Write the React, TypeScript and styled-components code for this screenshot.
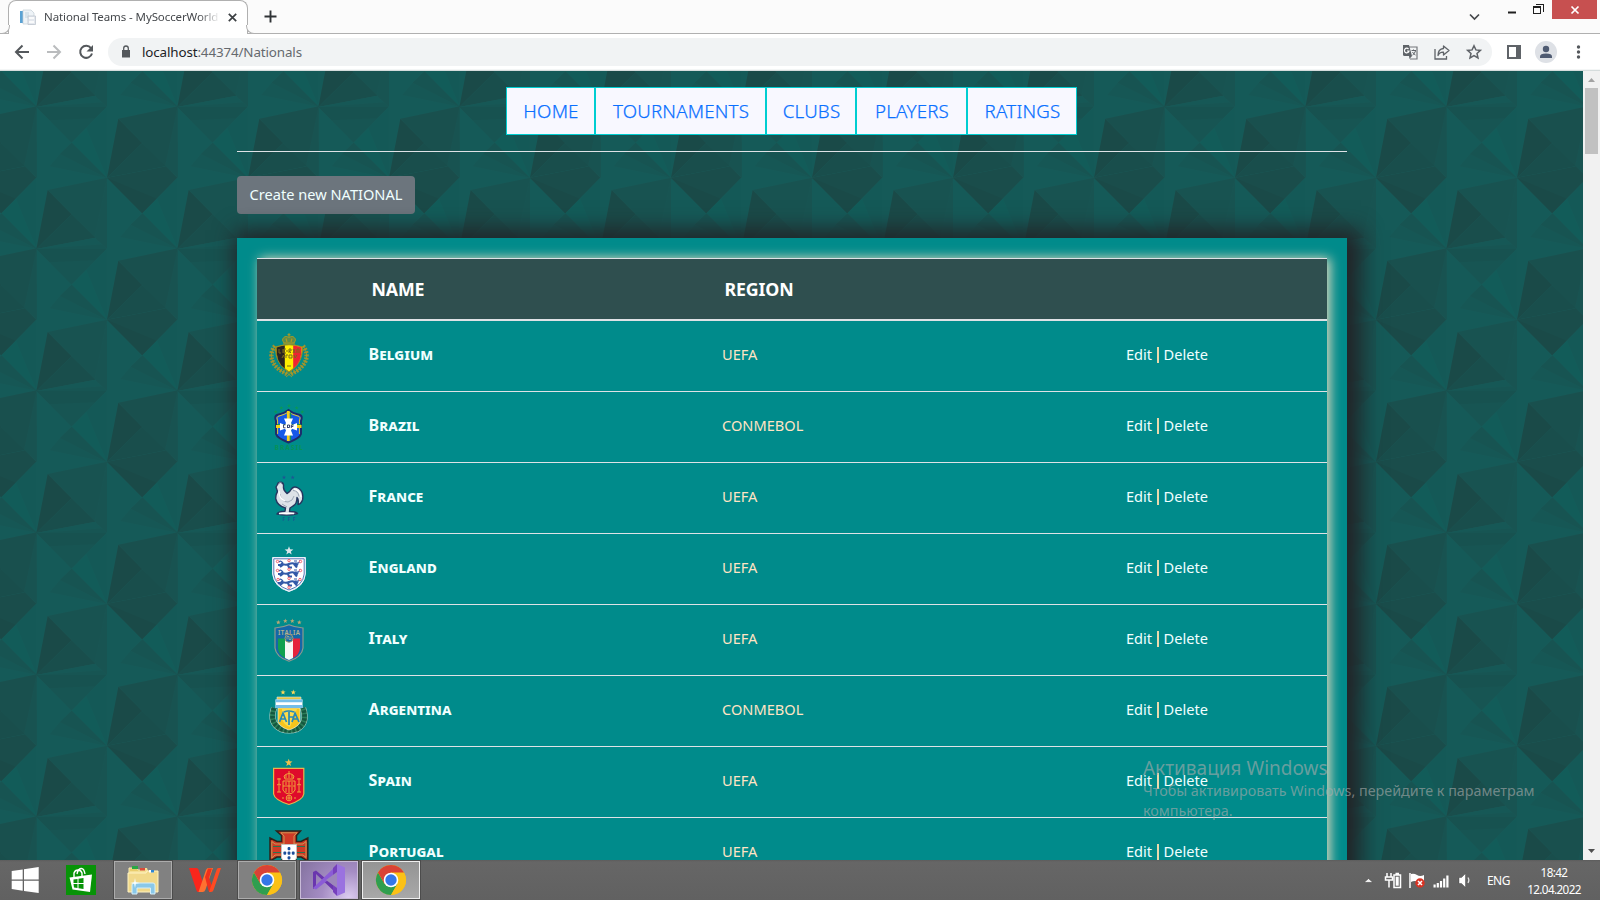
import React from "react";
import styled, { createGlobalStyle, css } from "styled-components";

/* ---------- page texture: one repeating tile of folded facets ---------- */
const facets = (x: number, y: number, dark: boolean) => `
<g transform="translate(${x} ${y})">
<path d="M34-177L212-214V0L174-34Z" fill="${dark ? "#19504e" : "#185351"}"/>
<path d="M212-214V0L174-34Z" fill="#175553" opacity=".6"/>
<path d="M0 0L34-177L106-104Z" fill="#1a4a48"/>
<path d="M0 0L106-104L177-34Z" fill="#194e4c"/>
<path d="M0 0L177-34L190-18L211 0Z" fill="#165856"/>
<path d="M0 0L200-14L211 0Z" fill="#175553"/>
${
  dark
    ? `<path d="M0 0L177-34L211 0L106 107Z" fill="#1a4d4b"/><path d="M0 0L150 63L106 107Z" fill="#1a4a48"/>`
    : `<path d="M0 0H211L106 107Z" fill="#175553"/><path d="M0 0H211L176 34L40 40Z" fill="#175250"/>`
}
<path d="M106 107L211 0L212 213Z" fill="#145957"/>
<path d="M106 107L150 63L212 213Z" fill="#125c59"/>
<path d="M106 107L212 213L40 178L71 141Z" fill="#165755"/>
<path d="M106 107L212 213L71 141Z" fill="#175452"/>
</g>`;
const points: [number, number, boolean][] = [];
for (let r = -1; r < 3; r++)
  for (let c = -1; c < 3; c++) {
    points.push([109 + c * 423, 111 + r * 426, false]);
    points.push([321 + c * 423, 323 + r * 426, true]);
  }
const tile = `<svg xmlns="http://www.w3.org/2000/svg" width="141" height="142" viewBox="0 3 423 426"><rect y="3" width="423" height="426" fill="#155a58"/>${points
  .map((p) => facets(...p))
  .join("")}</svg>`;
const texture = `url("data:image/svg+xml,${encodeURIComponent(tile).replace(/\(/g, "%28").replace(/\)/g, "%29")}")`;

const Global = createGlobalStyle`
  * { box-sizing: border-box; }
  body { margin: 0; overflow: hidden; font-family: "Noto Sans", "Open Sans", sans-serif; }
`;

const Screen = styled.div`
  position: relative;
  width: 1600px;
  height: 900px;
  display: flex;
  flex-direction: column;
  overflow: hidden;
`;

/* ---------- browser frame ---------- */
const TabStrip = styled.header`
  flex: none;
  height: 34px;
  display: flex;
  align-items: flex-start;
  padding: 0 3px 0 8px;
  background: #fbfbfb;
  box-shadow: inset 0 -1px #b0b0b0;
`;
const Tab = styled.div`
  position: relative;
  width: 240px;
  height: 34px;
  display: flex;
  align-items: center;
  padding: 0 10px 0 11px;
  background: #fff;
  border: 1px solid #b0b0b0;
  border-bottom: 0;
  border-radius: 8px 8px 0 0;
  &::before,
  &::after {
    content: "";
    position: absolute;
    bottom: 0;
    width: 8px;
    height: 8px;
    border-bottom: 1px solid #b0b0b0;
    background: #fbfbfb;
  }
  &::before {
    left: -8px;
    border-right: 1px solid #b0b0b0;
    border-bottom-right-radius: 8px;
  }
  &::after {
    right: -8px;
    border-left: 1px solid #b0b0b0;
    border-bottom-left-radius: 8px;
  }
`;
const TabTitle = styled.span`
  width: 176px;
  margin: 0 8px 2px 8px;
  overflow: hidden;
  white-space: nowrap;
  font-size: 11.5px;
  letter-spacing: -0.1px;
  color: #45484c;
  mask-image: linear-gradient(90deg, #000 88%, transparent);
`;
const NewTab = styled.div`
  margin: 10px auto 0 15.5px;
  display: flex;
`;
const TabSearch = styled.div`
  display: flex;
  margin: 13px 20px 0 0;
`;
const WindowButtons = styled.div`
  display: flex;
  align-items: flex-start;
`;
const WindowButton = styled.div<{ $close?: boolean }>`
  width: ${(p) => (p.$close ? 45 : 26)}px;
  height: 19px;
  display: flex;
  align-items: center;
  justify-content: center;
  padding-right: ${(p) => (p.$close ? 0 : 2)}px;
  background: ${(p) => (p.$close ? "#c75050" : "transparent")};
`;
const Toolbar = styled.div`
  flex: none;
  height: 37px;
  display: flex;
  align-items: center;
  padding: 0 12px 1px 12px;
  background: #fff;
  border-bottom: 1px solid #d5dcdc;
  box-shadow: inset 0 -1px #f4f6f6;
`;
const NavIcons = styled.div`
  display: flex;
  gap: 12px;
  margin-right: 12px;
`;
const AddressBar = styled.div`
  flex: 1;
  height: 28px;
  display: flex;
  align-items: center;
  padding: 0 8px 0 11px;
  border-radius: 14px;
  background: #f1f3f4;
`;
const Url = styled.span`
  margin: 0 auto 0 9px;
  font-size: 13.4px;
  letter-spacing: -0.13px;
  color: #65696e;
  b {
    font-weight: 400;
    color: #202124;
  }
`;
const AddressIcons = styled.div`
  display: flex;
  gap: 12px;
`;
const BrowserActions = styled.div`
  display: flex;
  align-items: center;
  margin-left: 12px;
`;
const Avatar = styled.div`
  width: 22px;
  height: 22px;
  margin: 0 11px 0 11px;
  display: flex;
  border-radius: 50%;
  background: #dee1e6;
`;

/* ---------- web page ---------- */
const Viewport = styled.div`
  flex: none;
  height: 789px;
  display: flex;
  overflow: hidden;
`;
const Page = styled.main`
  width: 1583px;
  height: 789px;
  overflow: hidden;
  padding: 16px 236px 0 237px;
  background: #155a58 ${texture} 0 0 / 141px 142px;
`;
const Menu = styled.nav`
  display: flex;
  justify-content: center;
  padding: 0 1px 16px 0;
  border-bottom: 1px solid #dee2e6;
`;
const MenuItem = styled.a<{ $w: number }>`
  width: ${(p) => p.$w}px;
  height: 48px;
  display: flex;
  align-items: center;
  justify-content: center;
  padding: 0 0 1px 1px;
  border: 1px solid #00ced1;
  background: #f8f8ff;
  color: #0a70ff;
  font-size: 18.7px;
  font-weight: 300;
  letter-spacing: 0.2px;
  -webkit-text-stroke: 0.25px #0a70ff;
`;
const CreateButton = styled.a`
  width: 178px;
  height: 38px;
  margin: 24px 0;
  padding-bottom: 2px;
  display: flex;
  align-items: center;
  justify-content: center;
  border-radius: 4px;
  background: #6c757d;
  color: azure;
  font-size: 14.6px;
`;
const Card = styled.section`
  width: 1110px;
  height: 640px;
  padding: 20px;
  background: #008b8b;
  box-shadow: 6px 0 20px 8px #222428;
`;
const Table = styled.div`
  height: 640px;
  border-top: 1px solid #dee2e6;
  background: #008b8b;
  box-shadow: 3px 0 11px rgba(255, 228, 196, 0.9);
`;
const columns = css`
  display: grid;
  grid-template-columns: 100px 353px 404px 1fr;
  align-items: center;
`;
const HeaderRow = styled.div`
  ${columns}
  height: 62px;
  border-bottom: 2px solid #dee2e6;
  background: #2f4f4f;
  color: #fff;
  font-size: 17.8px;
  font-weight: 700;
`;
const HeaderCell = styled.span`
  padding-left: 14.5px;
  letter-spacing: -0.15px;
`;
const Row = styled.div`
  ${columns}
  height: 71px;
  border-bottom: 1px solid #dee2e6;
`;
const Cell = styled.div`
  display: flex;
  padding-left: 12px;
`;
const TextCell = styled(Cell)`
  padding-bottom: 4px;
  font-size: 14.6px;
`;
const TeamName = styled(TextCell)`
  padding-left: 11.5px;
  color: azure;
  font-size: 16px;
  font-weight: 700;
  font-variant: small-caps;
  letter-spacing: 0.08px;
`;
const Region = styled(TextCell)`
  color: bisque;
`;
const Actions = styled(TextCell)`
  gap: 4.7px;
  color: azure;
`;
const Bar = styled.span`
  width: 2px;
  height: 16px;
  margin-top: 3px;
  background: #e9d9ad;
`;

const Scroll = styled.div`
  width: 17px;
  display: flex;
  flex-direction: column;
  align-items: center;
  background: #f1f1f1;
`;
const ScrollThumb = styled.div`
  width: 13px;
  height: 66px;
  margin-bottom: auto;
  background: #c1c1c1;
`;
const ScrollArrow = styled.svg`
  width: 17px;
  height: 17px;
  display: block;
`;

/* ---------- desktop ---------- */
const Taskbar = styled.footer`
  flex: none;
  height: 40px;
  display: flex;
  background: linear-gradient(#5c5c5c, #666 2px, #616161);
`;
const PinnedApps = styled.div`
  display: flex;
  margin-right: 2px;
`;
const TaskItem = styled.div<{ $w: number; $look?: "open" | "active" | "violet" }>`
  width: ${(p) => p.$w}px;
  height: 38px;
  margin: 1px 4px 0 0;
  flex: none;
  display: flex;
  align-items: center;
  justify-content: center;
  ${(p) => p.$look === "open" && "background:#818181;border:1px solid #acacac;box-shadow:0 0 0 1px #4c4c4c;"}
  ${(p) => p.$look === "active" && "background:linear-gradient(#949494,#a8a8a8);border:1px solid #eee;box-shadow:0 0 0 1px #4c4c4c;"}
  ${(p) =>
    p.$look === "violet" &&
    "background:radial-gradient(circle at 85% 100%,#dccdf0 0,#a58dc4 45%,#83729f 100%);border:1px solid #c9bbd8;box-shadow:0 0 0 1px #4c4c4c;"}
`;
const Tray = styled.div`
  margin-left: auto;
  padding-right: 18px;
  display: flex;
  align-items: center;
  color: #fff;
  font-size: 12px;
`;
const Language = styled.span`
  width: 24px;
  margin: 0 15px 0 15px;
  letter-spacing: -0.55px;
`;
const Clock = styled.div`
  width: 56px;
  padding-top: 1px;
  text-align: center;
  font-size: 11.7px;
  line-height: 17px;
  letter-spacing: -0.6px;
  white-space: nowrap;
`;
const Watermark = styled.aside`
  position: absolute;
  left: 1143px;
  top: 754px;
  width: 410px;
  color: rgba(172, 172, 172, 0.62);
  font-size: 14.33px;
  line-height: 20px;
`;
const WatermarkTitle = styled.div`
  font-size: 19px;
  line-height: 28px;
  margin-bottom: -1px;
`;

/* ---------- crests ---------- */
const Svg = styled.svg`
  display: block;
  flex: none;
  overflow: visible;
`;
const Crest = ({ children }: { children: React.ReactNode }) => (
  <Svg width="40" height="46" viewBox="0 0 40 46">
    {children}
  </Svg>
);
const Star = ({ x, y, r, fill }: { x: number; y: number; r: number; fill: string }) => {
  const pts = Array.from({ length: 10 }, (_, i) => {
    const a = (Math.PI / 5) * i - Math.PI / 2;
    const d = i % 2 ? r * 0.42 : r;
    return `${x + d * Math.cos(a)},${y + d * Math.sin(a)}`;
  }).join(" ");
  return <polygon points={pts} fill={fill} />;
};

const Belgium = () => (
  <Crest>
    <g fill="none" stroke="#9d9230" strokeDasharray="1.8 1.3">
      <path d="M6 13C0 20 0 33 18 41M34 13c6 7 6 20-12 28" strokeWidth="4.4" />
    </g>
    <path d="M6 13C0 20 0 33 18 41M34 13c6 7 6 20-12 28M17 44l6-5M23 44l-6-5" fill="none" stroke="#b39b20" strokeWidth=".8" />
    <path d="M14 5.500c2-3 4-2 6-1c2-1 4-2 6 1c1 2 0 2.500-1 4.500H15c-1-2-2-2.500-1-4.500Z" fill="#5f8c48" stroke="#b39b20" />
    <path d="M20 .3v4M18.5 1.8h3M14 11h12M17 5.500l1 3.500M23 5.500l-1 3.500" stroke="#b39b20" strokeWidth="1.1" />
    <path d="M6.7 14Q20 9.5 33.3 14Q34 30 20 39Q6 30 6.7 14Z" fill="#ffee00" stroke="#9c8b1e" strokeWidth="1.2" />
    <path d="M7.4 14.4q4-1.3 8.4-1.8v23Q7 29 7.4 14.4Z" fill="#2a2422" />
    <path d="M32.6 14.4q-4-1.3-8.4-1.8v23Q33 29 32.6 14.4Z" fill="#ee2433" />
    <g fill="none" stroke="#7d6a1a" strokeWidth="1">
      <path d="M10 16v4h2M14 16v4M17 16h-2v4h2M17 18h2M20 20v-4h2v2h-2l2 2M24 16l2 4M26 16l-2 4M28 20v-4h2v4M13 25l1.500-3 1 3M17 22v3M19 22h-2M20 22v3h3v-3h-3M25 22l1 3 2-3M18 33h4" />
    </g>
  </Crest>
);
const Brazil = () => (
  <Crest>
    {[[20, 1.8], [12.3, 4], [27.7, 4], [6.7, 8], [33.3, 8]].map(([x, y]) => (
      <Star key={x} x={x} y={y} r={2} fill="#0a9a55" />
    ))}
    <path d="M8 11Q16 9 19.5 6Q23 9 31 11Q34 12 32 17V30Q31 34 19.5 38.5Q8 34 7 30V17Q5 12 8 11Z" fill="#1558e8" stroke="#1d2c6b" strokeWidth="1.9" />
    <path d="M8.6 30V17Q7 13 9 12.4Q16 10.6 19.5 8Q23 10.6 30 12.4Q32 13 30.4 17V30" fill="none" stroke="#e6c628" strokeWidth="1" />
    <path d="M19.3 7v30M7 22.5h25.5" stroke="#f6cf17" strokeWidth="2.8" />
    <path d="M21.6 8.5v28M8 20.5h24" stroke="#129356" strokeWidth="1.2" />
    <path d="M15 14.500h9l-2 4.500 1 2 5-2v7.500l-5-1.700-1 1.700 2 5h-9l2-5-1-1.700-5 1.700v-7.500l5 2 1-2Z" fill="#fff" />
    <path d="M16.5 20.8h-2v3h2M18.5 24v-3h2v2.5h-2M22.3 24v-3h2.4M22.3 22.5h2" stroke="#27315f" fill="none" strokeWidth=".9" />
    <text x="19.8" y="46" textAnchor="middle" fontFamily="Noto Sans" fontWeight="700" fontSize="6.3" textLength="28" fill="#059357">BRASIL</text>
  </Crest>
);
const France = () => (
  <Crest>
    <Star x={15} y={2.4} r={2.2} fill="#1c5793" />
    <Star x={23.7} y={2.4} r={2.2} fill="#1c5793" />
    <path d="M7 12l1.500-2.500Q9 7 12 7.300Q15 8 14.500 11.500Q14 15 18 18.500Q21 17 22 14.500Q25 10 30 13.500Q35 17.500 33.500 25Q32 29 29 29.500Q30 24 28 22.500Q28 29 24 31L21 33L20.500 36.500Q27 36.500 28.500 38.500Q19 41.500 8 39Q9 36.500 16 36.200L16.500 33Q8.500 31 6.800 24Q6.500 19.500 8.500 16.500Z" fill="#dde2e8" stroke="#26365f" strokeWidth="1.4" strokeLinejoin="round" />
    <path d="M11 19q1 8 8 8q5-1 6-6M24 15.500q5 0 6 6M9.500 8.500q1-2 3-1M13 29l5 3" fill="none" stroke="#8f9bab" strokeWidth=".8" />
    <path d="M10 16q0 8 6 10M10 38.500h15M25 14q6 1 7 8" fill="none" stroke="#fff" strokeWidth="1.3" />
    <text x="20" y="46" textAnchor="middle" fontFamily="Noto Sans" fontWeight="700" fontSize="4.5" textLength="13" fill="#1c5793">FFF</text>
  </Crest>
);
const England = () => (
  <Crest>
    <Star x={20} y={4.8} r={4.6} fill="#dbe5ea" />
    <path d="M3.6 11.5H36.4V28Q35 41 20 45.5Q5 41 3.6 28Z" fill="#fff" stroke="#e8effa" />
    <path d="M4.8 12.8H35.2V28Q34 39.5 20 44Q6 39.5 4.8 28Z" fill="#fff" stroke="#3f64ad" strokeWidth=".9" />
    {[17, 26, 35].map((y) => (
      <g key={y} fill="none" stroke="#3259a8">
        <path d={`M12 ${y}q4 3 8 1t9 1M15 ${y + 1}l-4 3M19 ${y + 2}l1 2.500h3M25 ${y + 1}l3 3.500M13 ${y + 2}l-4 0`} strokeWidth="2.1" />
        <path d={`M10 ${y - 1}q2-2 4 1M26 ${y}q5 1 5-3M25 ${y - 2}h3`} strokeWidth="1.2" />
      </g>
    ))}
    {[[8.5, 15.5], [20, 14.6], [31.5, 15.5], [8.5, 24.5], [31.5, 24.5], [20, 23.3], [9, 33.5], [31, 33.5], [20, 32.4], [20, 41.3]].map(([x, y]) => (
      <circle key={`${x}-${y}`} cx={x} cy={y} r="1.2" fill="#fff" stroke="#ee5260" strokeWidth=".9" />
    ))}
  </Crest>
);
const Italy = () => (
  <Crest>
    {[[9.3, 5.4], [16.3, 4], [23.3, 4], [30.3, 5.4]].map(([x, y]) => (
      <Star key={x} x={x} y={y} r={2.4} fill="#bba873" />
    ))}
    <path d="M6 11Q14 10.5 20 7.8Q26 10.5 34 11V31Q33 40 20 44.3Q7 40 6 31Z" fill="#1467a8" stroke="#8c9b8d" strokeWidth="1.2" />
    <path d="M9 21.5H16V41Q9.5 38 9 31Z" fill="#12a04f" />
    <path d="M16 21.5h8V41l-4 2-4-2Z" fill="#f7f7f5" />
    <path d="M24 21.5h7V31q-.5 7-7 10Z" fill="#e5233c" />
    <text x="20" y="17.7" textAnchor="middle" fontFamily="Noto Sans" fontWeight="600" fontSize="6.2" textLength="22" fill="#b6b38e">ITALIA</text>
    <circle cx="20" cy="21.3" r="4" fill="#1467a8" stroke="#a59c71" strokeWidth="1" />
    <path d="M18 22.5v-3h2v3h2v-3" stroke="#a8b094" strokeWidth=".8" fill="none" />
  </Crest>
);
const Argentina = () => (
  <Crest>
    <Star x={14} y={4.3} r={2.7} fill="#ffd957" />
    <Star x={24.3} y={4.3} r={2.7} fill="#ffd957" />
    <path d="M5 20Q0 35 12 41Q20 44 28 41Q39 35 34 20" fill="none" stroke="#a8c7bd" strokeWidth="6.2" />
    <path d="M5 20Q0 35 12 41Q20 44 28 41Q39 35 34 20" fill="none" stroke="#2b7d58" strokeWidth="5" />
    <path d="M5 20Q0 35 12 41Q20 44 28 41Q39 35 34 20" fill="none" stroke="#14573f" strokeWidth="4.6" strokeDasharray="2.400 1.600" />
    <path d="M9 20H31V34Q29 39 20 42Q11 39 9 34Z" fill="#f6c51c" stroke="#f4ead0" strokeWidth=".7" />
    <path d="M13 21h15l-7 18q-7-3-8-8Z" fill="#ffe45f" opacity=".7" />
    <path d="M8 9H32V12H8Z" fill="#e7c544" stroke="#d2e6ed" strokeWidth=".6" />
    <path d="M6.500 11.5H33.500V20H6.500Z" fill="#fff" />
    <path d="M6.500 11.5H33.500V14.200H6.500ZM6.500 17H33.500V20H6.500Z" fill="#75bde8" />
    <path d="M10.500 34l3.500-9 3.500 9M11.500 31h5M15 24q4-2 10 0M20 24v13M20 29h4M23 34l3-9 4 9M24 31h5" fill="none" stroke="#2588b7" strokeWidth="1.7" />
  </Crest>
);
const Spain = () => (
  <Crest>
    <Star x={19.7} y={3.7} r={4} fill="#f0c04b" />
    <path d="M4.6 9.4H34.8V35Q34 41 20 45.5Q5.5 41 4.6 35Z" fill="#df0a2b" stroke="#e8b54a" strokeWidth="1.2" />
    <g fill="none" stroke="#efa13b" strokeWidth="1">
      <path d="M15 17q5-5 10 0l-1 3h-8ZM20 12v7M17 15v4M23 15v4M10 19v14M8 20h4M8 33h4M8 26q2-2 4 0M30 19v14M28 20h4M28 33h4M28 26q2-2 4 0M14 22h12v9q-2 4-6 4t-6-4ZM14 27h12M20 22v12M17 23v3M23 28v5M17 29v4M23 23v3" />
      <circle cx="20" cy="39" r="2.800" />
      <path d="M13 39h2M25 39h2M18 39h4M20 37v4" />
    </g>
  </Crest>
);
const Portugal = () => (
  <Crest>
    <path d="M7.500 1H31.500L27.500 5.500V11.500H32L38.800 8V31L32 27H27V40H13V27H8L1 31V8L8 11.500H12.500V5.500Z" fill="#cf3a26" stroke="#2a241b" strokeWidth="1.500" />
    <path d="M12 2.800H28L25 6v8H34l3-2.500v16L34 25H6L2.800 28V11.500L6 14H15V6Z" fill="none" stroke="#c9ae5f" strokeWidth=".8" />
    <path d="M4 16.500h9M4 22.500h9M27 16.500h9M27 22.500h9" stroke="#2b7350" strokeWidth="1.200" />
    <path d="M12.500 14.500H27.500V28Q26 33 20 36Q14 33 12.500 28Z" fill="#fff" stroke="#c7c2bd" />
    {[[20, 18.5], [15.8, 23], [20, 23], [24.2, 23], [20, 27.8]].map(([x, y]) => (
      <rect key={`${x}-${y}`} x={x - 1.4} y={y - 1.6} width="2.8" height="3.3" rx="1" fill="#1b4e9b" />
    ))}
  </Crest>
);

const teams: { name: string; region: string; crest: React.FC }[] = [
  { name: "Belgium", region: "UEFA", crest: Belgium },
  { name: "Brazil", region: "CONMEBOL", crest: Brazil },
  { name: "France", region: "UEFA", crest: France },
  { name: "England", region: "UEFA", crest: England },
  { name: "Italy", region: "UEFA", crest: Italy },
  { name: "Argentina", region: "CONMEBOL", crest: Argentina },
  { name: "Spain", region: "UEFA", crest: Spain },
  { name: "Portugal", region: "UEFA", crest: Portugal },
];

const menu: [string, number][] = [
  ["HOME", 89],
  ["TOURNAMENTS", 171],
  ["CLUBS", 90],
  ["PLAYERS", 111],
  ["RATINGS", 110],
];

const Chrome = () => (
  <Svg width="30" height="30" viewBox="-15 -15 30 30">
    <circle r="15" fill="#fbc116" />
    <path d="M-13-7.5A15 15 0 0 0 0 15L6.5 3.7L-6.5 3.7Z" fill="#2f9e4f" />
    <path d="M0-7.5H13A15 15 0 0 1 0 15L6.5 3.7Z" fill="#fbc116" />
    <path d="M-13-7.5A15 15 0 0 1 13-7.5H0L-6.5 3.7Z" fill="#d94235" />
    <circle r="7.3" fill="#fff" />
    <circle r="5.7" fill="#3477e8" />
  </Svg>
);

export default function App() {
  return (
    <Screen>
      <Global />
      <TabStrip>
        <Tab>
          <Svg width="16" height="17" viewBox="0 0 16 17">
            <path d="M0 2h3v12H0Z" fill="#5aa2d4" />
            <path d="M3 1h8l3 3v11H3Z" fill="#eef3f7" stroke="#c3ced6" strokeWidth=".7" />
            <path d="M5 4h4M5 6h4M5 8h3" stroke="#c2d4e0" />
            <path d="M8 7h7.5v8.500H8Z" fill="#e4e8ee" stroke="#b9c0ca" strokeWidth=".7" />
            <path d="M9 9h5M9 13h5" stroke="#fff" strokeWidth="1.5" />
          </Svg>
          <TabTitle>National Teams - MySoccerWorld</TabTitle>
          <Svg width="9" height="9" viewBox="0 0 9 9">
            <path d="M.8.8l7.400 7.400M8.200.8L.8 8.200" stroke="#3c4043" strokeWidth="1.7" />
          </Svg>
        </Tab>
        <NewTab>
          <Svg width="13" height="13" viewBox="0 0 13 13">
            <path d="M6.500.5v12M.5 6.500h12" stroke="#303336" strokeWidth="1.9" />
          </Svg>
        </NewTab>
        <TabSearch>
          <Svg width="11" height="8" viewBox="0 0 11 8">
            <path d="M1 1.500l4.500 4.500L10 1.500" fill="none" stroke="#45484b" strokeWidth="1.7" />
          </Svg>
        </TabSearch>
        <WindowButtons>
          <WindowButton>
            <Svg width="8" height="10" viewBox="0 0 8 10">
              <path d="M0 7.500h8" stroke="#1f1f1f" strokeWidth="2" />
            </Svg>
          </WindowButton>
          <WindowButton>
            <Svg width="11" height="11" viewBox="0 0 11 11" shapeRendering="crispEdges">
              <path d="M2.500 .5h7.500v7.500" fill="none" stroke="#1f1f1f" />
              <path d="M.5 2.500h7v7h-7Z" fill="none" stroke="#1f1f1f" />
              <path d="M0 3h8" stroke="#1f1f1f" strokeWidth="2" />
            </Svg>
          </WindowButton>
          <WindowButton $close>
            <Svg width="8" height="8" viewBox="0 0 8 8">
              <path d="M.5.5l7 7M7.500.5l-7 7" stroke="#fff" strokeWidth="1.7" />
            </Svg>
          </WindowButton>
        </WindowButtons>
      </TabStrip>

      <Toolbar>
        <NavIcons>
          <Svg width="20" height="20" viewBox="0 0 20 20">
            <path d="M17 10H4.500M10.500 3.500L4 10l6.500 6.500" fill="none" stroke="#54585c" strokeWidth="2" />
          </Svg>
          <Svg width="20" height="20" viewBox="0 0 20 20">
            <path d="M3 10h12.500M9.500 3.500L16 10l-6.500 6.500" fill="none" stroke="#babcbe" strokeWidth="2" />
          </Svg>
          <Svg width="20" height="20" viewBox="0 0 20 20">
            <path d="M15 6.200A6 6 0 1 0 16 11.500" fill="none" stroke="#54585c" strokeWidth="2" />
            <path d="M17 3v6.500h-6.500Z" fill="#54585c" />
          </Svg>
        </NavIcons>
        <AddressBar>
          <Svg width="14" height="14" viewBox="0 0 14 14">
            <path d="M3 5h8v7.500H3Z" fill="#54585c" />
            <path d="M4.700 6V3.300a2.300 2.300 0 0 1 4.600 0V6" fill="none" stroke="#54585c" strokeWidth="1.300" />
          </Svg>
          <Url>
            <b>localhost</b>:44374/Nationals
          </Url>
          <AddressIcons>
            <Svg width="20" height="20" viewBox="0 0 20 20">
              <path d="M8 5h9v12h-7" fill="none" stroke="#74777b" strokeWidth="1.200" />
              <path d="M3 3h6l3 11H4.500Q3 14 3 12.500Z" fill="#5f6368" />
              <path d="M9.500 17l2.500-3H9Z" fill="#5f6368" />
              <path d="M8.500 7A2.300 2.300 0 1 0 9 9H7" fill="none" stroke="#fff" strokeWidth="1.200" />
              <path d="M11.500 8.500h4.500M13.500 7.500v1M15.500 9q-1 3-3 4M12.500 10q1 2 3 3" fill="none" stroke="#5f6368" />
            </Svg>
            <Svg width="20" height="20" viewBox="0 0 20 20">
              <path d="M3 7v10h11.500v-3" fill="none" stroke="#5f6368" strokeWidth="1.300" />
              <path d="M11.500 4l5.500 4.500-5.500 4.500v-2.800Q7.500 10 6 13.500Q6 7 11.500 6.500Z" fill="none" stroke="#5f6368" strokeWidth="1.300" strokeLinejoin="round" />
            </Svg>
            <Svg width="20" height="20" viewBox="0 0 20 20">
              <path d="M10 3.800l1.900 4.100 4.500.5-3.400 3 1 4.500-4-2.300-4 2.300 1-4.500-3.400-3 4.500-.5Z" fill="none" stroke="#5f6368" strokeWidth="1.500" />
            </Svg>
          </AddressIcons>
        </AddressBar>
        <BrowserActions>
          <Svg width="20" height="20" viewBox="0 0 20 20">
            <path d="M4 4h12v12H4Z" fill="#fff" stroke="#5f6368" strokeWidth="2" />
            <path d="M12 3h5v14h-5Z" fill="#5f6368" />
          </Svg>
          <Avatar>
            <Svg width="22" height="22" viewBox="0 0 22 22">
              <circle cx="11" cy="8" r="3.200" fill="#4f5b72" />
              <path d="M5 17v-1.500Q5 12.500 11 12.500t6 3V17Z" fill="#4f5b72" />
            </Svg>
          </Avatar>
          <Svg width="20" height="20" viewBox="0 0 20 20">
            <g fill="#54585c">
              <circle cx="10.500" cy="5" r="1.700" />
              <circle cx="10.500" cy="10" r="1.700" />
              <circle cx="10.500" cy="15" r="1.700" />
            </g>
          </Svg>
        </BrowserActions>
      </Toolbar>

      <Viewport>
        <Page>
          <Menu>
            {menu.map(([label, w]) => (
              <MenuItem key={label} $w={w}>
                {label}
              </MenuItem>
            ))}
          </Menu>
          <CreateButton>Create new NATIONAL</CreateButton>
          <Card>
            <Table>
              <HeaderRow>
                <span />
                <HeaderCell>NAME</HeaderCell>
                <HeaderCell>REGION</HeaderCell>
                <span />
              </HeaderRow>
              {teams.map(({ name, region, crest: Badge }) => (
                <Row key={name}>
                  <Cell>
                    <Badge />
                  </Cell>
                  <TeamName>{name}</TeamName>
                  <Region>{region}</Region>
                  <Actions>
                    <span>Edit</span>
                    <Bar />
                    <span>Delete</span>
                  </Actions>
                </Row>
              ))}
            </Table>
          </Card>
        </Page>
        <Scroll>
          <ScrollArrow viewBox="0 0 17 17">
            <path d="M5 11h7L8.500 7Z" fill="#a3a3a3" />
          </ScrollArrow>
          <ScrollThumb />
          <ScrollArrow viewBox="0 0 17 17">
            <path d="M5 6h7l-3.500 4Z" fill="#505050" />
          </ScrollArrow>
        </Scroll>
      </Viewport>

      <Taskbar>
        <PinnedApps>
          <TaskItem $w={50}>
            <Svg width="27" height="26" viewBox="0.300 0 27 26">
              <path d="M0 4l11-1.600v10.100H0ZM12.300 2.200L27 0v12.500H12.300ZM0 13.700h11v10L0 22ZM12.300 13.700H27V26l-14.700-2.100Z" fill="#fff" />
            </Svg>
          </TaskItem>
          <TaskItem $w={54}>
            <Svg width="30" height="30" viewBox="0 0 30 30">
              <path d="M0 0h30v30H0Z" fill="#079307" />
              <path d="M3.500 12.500L26 9.500l-2 17.500-17.500-2.500Z" fill="#fff" />
              <path d="M8 12V8q1-3 4-3t4 3v3M11 9q1-5 4-5.500t4 5.500" fill="none" stroke="#fff" strokeWidth="1.400" />
              <path d="M7.500 14.500l4-.6v4.200h-4ZM12.500 13.700l5-.7v5h-5ZM7.500 19h4v4l-3.500-.6ZM12.500 19h5v5l-5-.8Z" fill="#079307" />
            </Svg>
          </TaskItem>
        </PinnedApps>
        <TaskItem $w={58} $look="open">
          <Svg width="32" height="30" viewBox="0 0 32 30">
            <path d="M2 3h8l1 2h9v20H2Z" fill="#e9cd6c" stroke="#f6ebb4" />
            <path d="M5 1h6v3H5Z" fill="#2aa845" />
            <path d="M3 6h10l1-3h6l1 3h9v20H3Z" fill="#f4df93" />
            <path d="M13 3h5v2.500h-5Z" fill="#d84b3a" />
            <path d="M1 8h18l1-2h11v21H1Z" fill="#f1d98a" stroke="#fff3c2" />
            <path d="M22 5h5v2.500h-5Z" fill="#fff" />
            <path d="M24 5h3v2.500h-3Z" fill="#2f86cf" />
            <path d="M5 29V20q0-2 2-2h19q2 0 2 2v9h-4.500v-6H10v6Z" fill="#8ac8e8" stroke="#d5effa" />
            <path d="M8 13l.8 4.200 4.200.8-4.200.8L8 23l-.8-4.200L3 18l4.200-.8Z" fill="#f8ffff" />
          </Svg>
        </TaskItem>
        <TaskItem $w={58}>
          <Svg width="32" height="24" viewBox="0 0 32 24">
            <path d="M0 0h7.500q1.500 0 2 1.500l4.500 13-2 8.500q-1 1-2 1H9.500Q8 24 7.500 22.500Z" fill="#f9261c" />
            <path d="M9.500 24L17 2Q17.800 0 19.500 0h4.500l-7.500 21.500Q15.700 24 13.500 24Z" fill="#ff7130" />
            <path d="M16 9l3-8.500h4l-3 9.500 3 8-1.500 6q-1.500 0-2-1.500Z" fill="#f0301c" />
            <path d="M20 24l7.500-22Q28 .2 29.500 0H32l-7.500 22Q24 24 22 24Z" fill="#ff4a22" />
          </Svg>
        </TaskItem>
        <TaskItem $w={58} $look="open">
          <Chrome />
        </TaskItem>
        <TaskItem $w={58} $look="violet">
          <Svg width="33" height="32" viewBox="0 0 33 32">
            <path d="M0 8l3-1.500L25 25v6L3 10v13l-3 2Z" fill="#6a36ae" />
            <path d="M0 24l24-23v8L3 25.500Z" fill="#8b5cd6" />
            <path d="M24 0l8 3.500v25L24 32Z" fill="#9a72e0" />
            <path d="M24 0l-4 4v24l4 4Z" fill="#7640bd" />
            <path d="M13 16l11-8v16Z" fill="#9c86bb" />
          </Svg>
        </TaskItem>
        <TaskItem $w={58} $look="active">
          <Chrome />
        </TaskItem>

        <Tray>
          <Svg width="112" height="20" viewBox="0 0 112 20">
            <path d="M4 12.500h9L8.500 8.500Z" fill="#eee" stroke="#4a4a4a" strokeWidth=".6" />
            <g fill="none" stroke="#fff" strokeWidth="1.500">
              <path d="M27 3v4M31 3v4M25.500 7h7v3h-7ZM29 10v7.500" />
              <path d="M34 5h6.500v12.500H34ZM35.500 3.500h3.500" />
            </g>
            <path d="M35.700 6.700h3v9h-3Z" fill="#fff" />
            <path d="M50 3v15" stroke="#fff" strokeWidth="1.500" />
            <path d="M51 4q3-1 6 1t7 0v7q-3 2-6 0t-7 0Z" fill="#fff" />
            <circle cx="60" cy="13" r="4.700" fill="#d83324" />
            <path d="M58 11l4 4M62 11l-4 4" stroke="#fff" strokeWidth="1.500" />
            <path d="M73.500 14.500h2.200v3h-2.200ZM76.700 13h2.200v4.500h-2.200ZM79.900 11h2.200v6.500h-2.200ZM83.100 8.500h2.200v9h-2.200ZM86.300 5.500h2.200v12h-2.200Z" fill="#fff" />
            <path d="M99 7.500h2.500l4-4v14l-4-4H99Z" fill="#fff" stroke="#333" strokeWidth=".4" />
            <path d="M108 7.500q1.800 2.700 0 5.500" fill="none" stroke="#e6e6e6" strokeWidth="1.200" />
          </Svg>
          <Language>ENG</Language>
          <Clock>
            18:42
            <br />
            12.04.2022
          </Clock>
        </Tray>
      </Taskbar>

      <Watermark>
        <WatermarkTitle>Активация Windows</WatermarkTitle>
        Чтобы активировать Windows, перейдите к параметрам компьютера.
      </Watermark>
    </Screen>
  );
}
